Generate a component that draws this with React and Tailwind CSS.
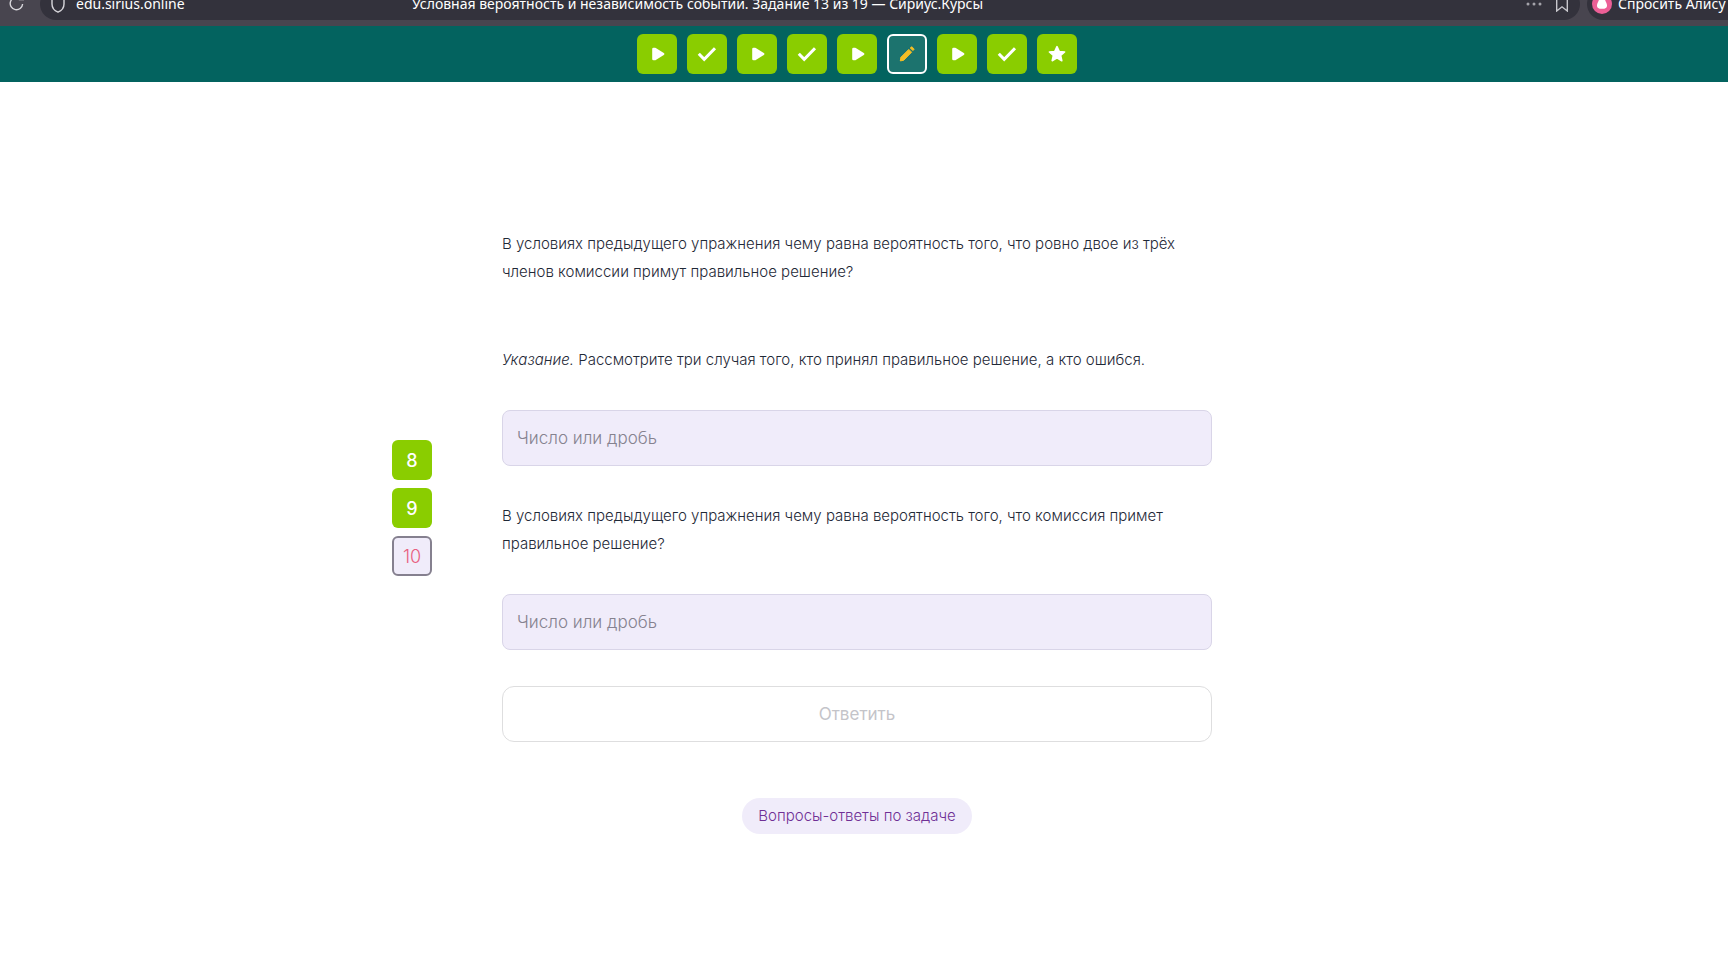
import { useState } from 'react';

const steps = [
  { type: 'video', label: 'Видео 8' },
  { type: 'done', label: 'Задание 9' },
  { type: 'video', label: 'Видео 10' },
  { type: 'done', label: 'Задание 11' },
  { type: 'video', label: 'Видео 12' },
  { type: 'current', label: 'Задание 13' },
  { type: 'video', label: 'Видео 14' },
  { type: 'done', label: 'Задание 15' },
  { type: 'star', label: 'Задание 16' }
];

const tasks = [
  { number: 8, done: true },
  { number: 9, done: true },
  { number: 10, done: false }
];

const StepIcon = ({ type }) => {
  if (type === 'video') {
    return (
      <svg viewBox="0 0 20 20" className="h-5 w-5" fill="white" stroke="white" strokeWidth="2.6" strokeLinejoin="round">
        <path d="M6.5 5v10h1.6l8-5-8-5z" />
      </svg>
    );
  }
  if (type === 'done') {
    return (
      <svg viewBox="0 0 20 20" className="h-5 w-5" fill="none" stroke="white" strokeWidth="3">
        <path d="M1.8 9.8l5.4 5.6L18 4.2" />
      </svg>
    );
  }
  if (type === 'star') {
    return (
      <svg viewBox="0 0 20 20" className="h-5 w-5" fill="white" stroke="white" strokeWidth="1.6" strokeLinejoin="round">
        <path d="M10 2.6l2.3 4.9 5.3.5-4 3.5 1.2 5.2-4.8-2.8-4.8 2.8 1.2-5.2-4-3.5 5.3-.5z" />
      </svg>
    );
  }
  return (
    <svg viewBox="0 0 20 20" className="h-5 w-5" fill="#f5be24" stroke="#f5be24" strokeWidth="1" strokeLinejoin="round">
      <path d="M3.3 16.9l.6-3.6L11.800 5.400l2.800 2.800-7.900 8.100z" />
      <path d="M13.300 4l.9-.9q.5-.5 1 0l1.600 1.600q.5.5 0 1l-.9.9z" />
    </svg>
  );
};

const BrowserBar = () => (
  <div className="flex h-[26px] items-end gap-[7px] overflow-hidden bg-[#48454f] pb-1.5 font-['Noto_Sans',sans-serif] text-sm text-white">
    <button aria-label="Обновить" className="flex h-8 w-[33px] shrink-0 items-center justify-center">
      <svg viewBox="0 0 18 18" className="h-[18px] w-[18px]" fill="none" stroke="#d8d7dc" strokeWidth="1.4">
        <path d="M11 2.9A6.2 6.2 0 1 0 14.6 9M11.5 0v4.5H16" />
      </svg>
    </button>
    <div className="flex h-8 min-w-0 flex-1 items-center rounded-2xl bg-[#33323c] pr-3 pl-2.5">
      <svg viewBox="0 0 16 18" className="h-[18px] w-4 shrink-0" fill="none" stroke="#d8d7dc" strokeWidth="1.4">
        <path d="M8 1L2 3.5V9c0 4 2.6 6.8 6 8.2 3.4-1.4 6-4.2 6-8.2V3.5z" />
      </svg>
      <a href="#page" className="ml-2.5 w-[336px] shrink-0">edu.sirius.online</a>
      <p className="min-w-0 flex-1 truncate">Условная вероятность и независимость событий. Задание 13 из 19 — Сириус.Курсы</p>
      <button aria-label="Ещё" className="flex w-4 shrink-0 justify-center">
        <svg viewBox="0 0 16 4" className="h-1 w-4" fill="#a4a3aa">
          <circle cx="2" cy="2" r="1.5" />
          <circle cx="8" cy="2" r="1.5" />
          <circle cx="14" cy="2" r="1.5" />
        </svg>
      </button>
      <button aria-label="В закладки" className="ml-3.5 shrink-0">
        <svg viewBox="0 0 12 16" className="h-4 w-3" fill="none" stroke="#c8c7cd" strokeWidth="1.4">
          <path d="M.7 1v14L6 10.8l5.3 4.2V1z" />
        </svg>
      </button>
    </div>
    <button className="flex h-8 w-[141px] shrink-0 items-center gap-1.5 rounded-l-2xl bg-[#33323c] pl-[5px] whitespace-nowrap">
      <svg viewBox="0 0 20 20" className="h-5 w-5 shrink-0">
        <circle cx="10" cy="10" r="10" fill="#ec5f96" />
        <path d="M10 3.5c2.8 0 3 2.8 4.2 5 1.4 2.6 1.6 6.3-4.2 6.3s-5.6-3.7-4.2-6.3c1.2-2.2 1.400-5 4.200-5z" fill="white" />
      </svg>
      Спросить Алису
    </button>
  </div>
);

const AnswerField = ({ id, label }) => {
  const [value, setValue] = useState('');
  return (
    <input
      id={id}
      aria-label={label}
      value={value}
      onChange={(e) => setValue(e.target.value)}
      placeholder="Число или дробь"
      className="block h-14 w-full rounded-lg border border-[#d9d5e8] bg-[#f0ecfa] px-3.5 text-[17px] text-[#33343f] placeholder:text-[#85828f]"
    />
  );
};

const App = () => (
  <div id="page" className="min-h-screen bg-white font-[Inter,sans-serif] text-[#1f2937]">
    <BrowserBar />

    <header className="flex h-14 items-center justify-center gap-2.5 bg-[#03635f] pr-3.5">
      {steps.map((step) => (
        <button
          key={step.label}
          aria-label={step.label}
          className={`flex h-10 w-10 items-center justify-center rounded-md ${step.type === 'current' ? 'border-2 border-white bg-[#1c736e]' : 'bg-[#8acd00]'}`}
        >
          <StepIcon type={step.type} />
        </button>
      ))}
    </header>

    <main className="flex justify-center gap-[70px] pt-[148px] pr-[124px] pb-20">
      <nav aria-label="Задачи" className="mt-[210px] flex shrink-0 flex-col gap-2 self-start">
        {tasks.map((task) => (
          <button
            key={task.number}
            className={`h-10 w-10 rounded-md pt-0.5 text-lg ${task.done ? 'bg-[#8acd00] font-medium text-white' : 'border-2 border-[#85808f] bg-[#f0ecfa] font-light text-[#e8607f]'}`}
          >
            {task.number}
          </button>
        ))}
      </nav>

      <form className="w-full max-w-[710px] text-[15px] leading-7 font-light" onSubmit={(e) => e.preventDefault()}>
        <p>В условиях предыдущего упражнения чему равна вероятность того, что ровно двое из трёх членов комиссии примут правильное решение?</p>
        <p className="mt-[60px] mb-9"><em>Указание.</em> Рассмотрите три случая того, кто принял правильное решение, а кто ошибся.</p>
        <AnswerField id="exactly-two" label="Вероятность для двоих из трёх" />
        <p className="my-9">В условиях предыдущего упражнения чему равна вероятность того, что комиссия примет правильное решение?</p>
        <AnswerField id="committee" label="Вероятность для комиссии" />
        <button type="submit" disabled className="mt-9 h-14 w-full rounded-xl border border-[#dededf] text-[17px] font-normal text-[#c4c4c9]">Ответить</button>
        <div className="mt-14 flex justify-center">
          <button type="button" className="flex h-9 items-center rounded-full bg-[#f0ecfa] px-4 text-[#6f2f95]">Вопросы-ответы по задаче</button>
        </div>
      </form>
    </main>
  </div>
);

export default App;
